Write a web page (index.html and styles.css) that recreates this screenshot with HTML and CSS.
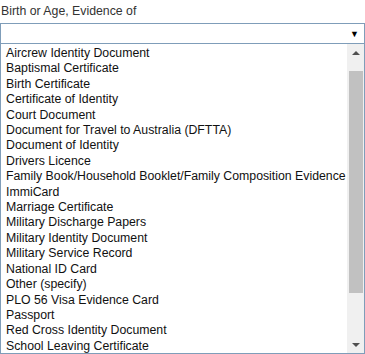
FILE: index.html
```html
<!DOCTYPE html>
<html lang="en">
<head>
    <meta charset="UTF-8">
    <title>Evidence of Birth or Age</title>
    <link rel="stylesheet" href="styles.css">
</head>
<body>
    <!-- 标签 -->
    <div class="label">Birth or Age, Evidence of</div>

    <!-- 下拉框 -->
    <div class="select">
        <span class="arrow">&#9660;</span>
    </div>

    <!-- 展开的列表 -->
    <div class="list">
        <ul class="options">
            <li>Aircrew Identity Document</li>
            <li>Baptismal Certificate</li>
            <li>Birth Certificate</li>
            <li>Certificate of Identity</li>
            <li>Court Document</li>
            <li>Document for Travel to Australia (DFTTA)</li>
            <li>Document of Identity</li>
            <li>Drivers Licence</li>
            <li>Family Book/Household Booklet/Family Composition Evidence</li>
            <li>ImmiCard</li>
            <li>Marriage Certificate</li>
            <li>Military Discharge Papers</li>
            <li>Military Identity Document</li>
            <li>Military Service Record</li>
            <li>National ID Card</li>
            <li>Other (specify)</li>
            <li>PLO 56 Visa Evidence Card</li>
            <li>Passport</li>
            <li>Red Cross Identity Document</li>
            <li>School Leaving Certificate</li>
        </ul>
        <!-- 滚动条 -->
        <div class="scrollbar">
            <div class="btn up"></div>
            <div class="track">
                <div class="thumb"></div>
            </div>
            <div class="btn down"></div>
        </div>
    </div>
</body>
</html>
```

FILE: styles.css
```css
*{
    margin: 0;
    padding: 0;
    box-sizing: border-box;
}
body{
    width: 365px;
    height: 354px;
    overflow: hidden;
    background: #fff;
    font-family: "Liberation Sans", Arial, sans-serif;
    font-size: 12.3px;
    color: #222;
}
.label{
    height: 23px;
    line-height: 22px;
    padding-left: 1px;
    color: #333;
}
.select{
    height: 21px;
    width: 365px;
    border: 1px solid #7f9db9;
    display: flex;
    justify-content: flex-end;
    align-items: center;
    padding-right: 5px;
}
.select .arrow{
    font-size: 9px;
    color: #000;
}
.list{
    width: 365px;
    height: 310px;
    border: 1px solid #7f9db9;
    border-top: none;
    display: flex;
    overflow: hidden;
}
.options{
    list-style: none;
    flex: 1;
    min-width: 0;
    overflow: hidden;
    padding-left: 5px;
    padding-top: 2px;
}
.options li{
    height: 15.42px;
    line-height: 15.42px;
    white-space: nowrap;
    color: #111;
}
.scrollbar{
    width: 17px;
    flex-shrink: 0;
    background: #f0f0f0;
    display: flex;
    flex-direction: column;
}
.btn{
    height: 17px;
    display: flex;
    align-items: center;
    justify-content: center;
}
.btn::after{
    content: "";
    width: 0;
    height: 0;
    border-left: 4px solid transparent;
    border-right: 4px solid transparent;
}
.up::after{
    border-bottom: 4px solid #505050;
}
.down::after{
    border-top: 4px solid #505050;
}
.track{
    flex: 1;
    padding: 10px 1px 0 2px;
}
.thumb{
    height: 222px;
    background: #c1c1c1;
}
```
